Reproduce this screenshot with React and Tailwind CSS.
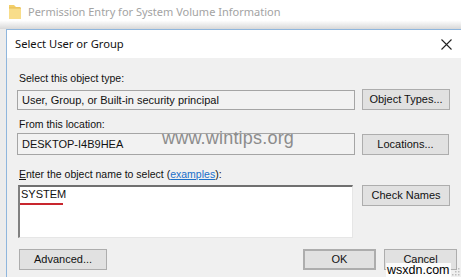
import React from 'react'

const ui = { fontFamily: '"Liberation Sans", Arial, sans-serif' }
const segoe = { fontFamily: '"Noto Sans", "Open Sans", sans-serif' }

const Btn = ({ children, className = '' }) => (
    <div className={`flex items-center justify-center h-[21px] bg-[#e1e1e1] border border-[#adadad] text-[11px] text-[#111] ${className}`}>
        {children}
    </div>
)

const FolderIcon = () => (
    <svg width="14" height="16" viewBox="0 0 14 16">
        <path d="M1 1 H6 L8 3 H12 V15 H1 Z" fill="#f3cf6a" />
        <path d="M1 4 H13 V15 H1 Z" fill="#f8dd8a" />
        <path d="M1 4 H13" stroke="#e6bd55" strokeWidth="1" />
    </svg>
)

export default function App() {
    return (
        <div className="relative w-[461px] h-[277px] overflow-hidden bg-[#ececec]" style={ui}>
            {/* parent window title */}
            <div className="h-[29px] flex items-start pt-[4px] pl-[8px] bg-linear-to-b from-white from-70% to-[#d8d8d8]">
                <FolderIcon />
                <span className="ml-[6px] mt-[1px] text-[11px] leading-[14px] text-[#a3a3a3]" style={segoe}>
                    Permission Entry for System Volume Information
                </span>
            </div>

            <div className="pl-[6px]">
                <div className="border-l border-t border-[#8fb6dd] bg-[#f0f0f0] h-[260px]">
                    {/* dialog title bar */}
                    <div className="h-[28px] bg-white flex items-center pl-[8px] pr-[9px]">
                        <span className="text-[11.2px] text-[#111]" style={segoe}>Select User or Group</span>
                        <svg className="ml-auto" width="11" height="11" viewBox="0 0 11 11">
                            <path d="M0.5 0.5 L10.5 10.5 M10.5 0.5 L0.5 10.5" stroke="#222" strokeWidth="1.1" />
                        </svg>
                    </div>

                    {/* body */}
                    <div className="pl-[10px] pt-[13px] text-[10.5px] text-[#111]">
                        <div className="h-[14px] leading-[14px] pl-[2px]">Select this object type:</div>
                        <div className="mt-[4px] flex items-start gap-[7px]">
                            <div className="mt-[1px] w-[338px] h-[20px] border border-[#a5a5a5] bg-[#f2f2f2] flex items-center pl-[4px] text-[11px]">
                                User, Group, or Built-in security principal
                            </div>
                            <Btn className="w-[88px]">Object Types...</Btn>
                        </div>

                        <div className="mt-[7px] h-[14px] leading-[14px] pl-[2px]">From this location:</div>
                        <div className="mt-[2px] flex items-start gap-[7px]">
                            <div className="w-[338px] h-[22px] border border-[#a5a5a5] bg-[#f2f2f2] flex items-center pl-[4px] text-[11px]">
                                DESKTOP-I4B9HEA
                            </div>
                            <Btn className="mt-[1px] w-[87px]">Locations...</Btn>
                        </div>

                        <div className="mt-[12px] h-[14px] leading-[14px] pl-[2px]">
                            <span className="underline">E</span>nter the object name to select (<span className="text-[#1a6fc9] underline">examples</span>):
                        </div>
                        <div className="mt-[4px] flex items-start">
                            <div className="relative ml-[1px] w-[335px] h-[53px] bg-white border-t-2 border-l-2 border-t-[#707070] border-l-[#808080] border-r border-b border-r-[#e6e6e6] border-b-[#e6e6e6] pl-[1px] text-[11px] leading-[14px]">
                                SYSTEM
                                <div className="absolute left-0 top-[16px] w-[43px] h-[2px] bg-[#c8262e]" />
                            </div>
                            <Btn className="ml-[9px] w-[88px]">Check Names</Btn>
                        </div>

                        <div className="mt-[11px] flex items-start">
                            <Btn className="ml-[2px] w-[88px]">Advanced...</Btn>
                            <div className="ml-auto mr-[4px] flex gap-[8px]">
                                <Btn className="w-[73px] border-2 border-[#2f7fd3]">OK</Btn>
                                <Btn className="w-[73px]">Cancel</Btn>
                            </div>
                        </div>
                    </div>
                </div>
            </div>

            {/* watermarks */}
            <div className="absolute left-[162px] top-[128px] text-[18px] leading-[20px] tracking-[0.2px] text-[#8c8c8c]" style={ui}>
                www.wintips.org
            </div>
            <div className="absolute left-[386px] top-[263px] px-[1px] bg-white/85 text-[12.5px] leading-[14px] text-black" style={ui}>
                wsxdn.com
            </div>
            {/* size grip */}
            <svg className="absolute right-[1px] bottom-[1px]" width="8" height="8" viewBox="0 0 8 8">
                <rect x="6" y="0" width="1.5" height="1.5" fill="#bdbdbd" />
                <rect x="3" y="3" width="1.5" height="1.5" fill="#bdbdbd" />
                <rect x="6" y="3" width="1.5" height="1.5" fill="#bdbdbd" />
                <rect x="0" y="6" width="1.5" height="1.5" fill="#bdbdbd" />
                <rect x="3" y="6" width="1.5" height="1.5" fill="#bdbdbd" />
                <rect x="6" y="6" width="1.5" height="1.5" fill="#bdbdbd" />
            </svg>
        </div>
    )
}
